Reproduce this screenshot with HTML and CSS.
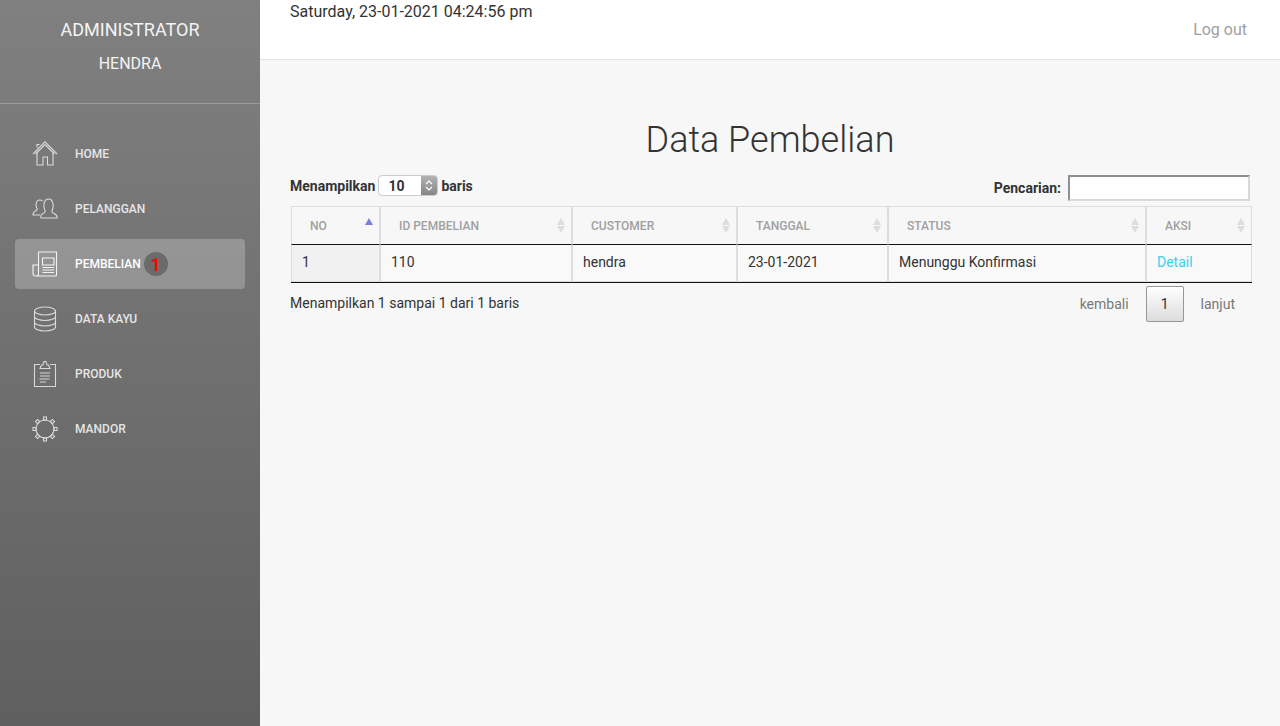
FILE: index.html
```html
<!DOCTYPE html>
<html lang="en">
<head>
  <meta charset="UTF-8">
  <meta name="viewport" content="width=device-width, initial-scale=1.0">
  <title>Data Pembelian</title>
  <link rel="stylesheet" href="styles.css">
</head>
<body>
  <div class="wrapper">
    <aside class="sidebar">
      <div class="logo">
        <div class="logo-role">ADMINISTRATOR</div>
        <div class="logo-name">HENDRA</div>
      </div>
      <ul class="nav">
        <li>
          <a href="#">
            <svg class="nav-icon" viewBox="0 0 26 26">
              <path d="M1 13 13 .8 25 13M3.500 13 13 3.500 22.500 13M5 6.500V3.500H7.500"/>
              <path d="M5 11.500V24h6v-8h4.500v8H21V11.500"/>
            </svg>
            <span>HOME</span>
          </a>
        </li>
        <li>
          <a href="#">
            <svg class="nav-icon" viewBox="0 0 26 26">
              <path d="M8 19H1c-.4-1.800.5-3 2.500-4 1.500-.7 2-1.300 1.500-2.500C4.200 11 3.800 9.500 4.200 7.500 4.700 5 6.300 4 7.800 4c1 0 2 .4 2.700 1.200"/>
              <path d="M9 22h16c.5-2-.5-3.300-3-4.500-2-.9-2.500-1.700-2-3 1-1.800 1.500-3.500 1-6.500C20.500 4.500 18.500 3 16.500 3S12.500 4.500 12 8c-.4 3 0 4.700 1 6.500.5 1.300 0 2.100-2 3-2.500 1.200-2.700 2.500-2 4.500z"/>
            </svg>
            <span>PELANGGAN</span>
          </a>
        </li>
        <li class="active">
          <a href="#">
            <svg class="nav-icon" viewBox="0 0 26 26">
              <path d="M6.500 1h18v23a1 1 0 0 1-1 1H3.500M6.500 1v21.500A2.500 2.500 0 0 1 4 25H3.500A2.500 2.500 0 0 1 1 22.500V14h5.500"/>
              <path d="M10.500 7h11.500v7H10.500zM10.500 16.500h11.500M10.500 19h11.500M10.500 21.500h11.500"/>
            </svg>
            <span>PEMBELIAN</span>
            <span class="badge">1</span>
          </a>
        </li>
        <li>
          <a href="#">
            <svg class="nav-icon" viewBox="0 0 26 26">
              <ellipse cx="13" cy="5" rx="10.500" ry="4"/>
              <path d="M2.500 5v16c0 2.200 4.700 4 10.500 4s10.500-1.800 10.500-4V5"/>
              <path d="M2.500 10.500c0 2.200 4.700 4 10.500 4s10.500-1.800 10.500-4M2.500 16c0 2.200 4.700 4 10.500 4s10.500-1.800 10.500-4"/>
            </svg>
            <span>DATA KAYU</span>
          </a>
        </li>
        <li>
          <a href="#">
            <svg class="nav-icon" viewBox="0 0 26 26">
              <path d="M8 3.500H2.500v22h21v-22H18M8 7.500 9.500 4H11l1-3.500h2L15 4h1.500L18 7.500z"/>
              <path d="M8 12h10M8 15h10M7.500 18h10M8 21h6"/>
            </svg>
            <span>PRODUK</span>
          </a>
        </li>
        <li>
          <a href="#">
            <svg class="nav-icon" viewBox="0 0 26 26">
              <circle cx="13" cy="13" r="9"/>
              <rect x="11.500" y="1" width="3" height="3"/>
              <rect x="11.500" y="1" width="3" height="3" transform="rotate(45 13 13)"/>
              <rect x="11.500" y="1" width="3" height="3" transform="rotate(90 13 13)"/>
              <rect x="11.500" y="1" width="3" height="3" transform="rotate(135 13 13)"/>
              <rect x="11.500" y="1" width="3" height="3" transform="rotate(180 13 13)"/>
              <rect x="11.500" y="1" width="3" height="3" transform="rotate(225 13 13)"/>
              <rect x="11.500" y="1" width="3" height="3" transform="rotate(270 13 13)"/>
              <rect x="11.500" y="1" width="3" height="3" transform="rotate(315 13 13)"/>
            </svg>
            <span>MANDOR</span>
          </a>
        </li>
      </ul>
    </aside>

    <div class="main">
      <header class="topbar">
        <div class="clock">Saturday, 23-01-2021 04:24:56 pm</div>
        <a class="logout" href="#">Log out</a>
      </header>

      <section class="content">
        <h2 class="title">Data Pembelian</h2>

        <div class="table-top">
          <label class="length">
            Menampilkan
            <span class="select">
              <span class="select-value">10</span>
              <span class="select-arrows">
                <svg viewBox="0 0 16 19"><path d="M5 8 8 5l3 3M5 11l3 3 3-3"/></svg>
              </span>
            </span>
            baris
          </label>
          <label class="search">
            Pencarian:
            <input type="text">
          </label>
        </div>

        <table class="data-table">
          <thead>
            <tr>
              <th class="col-no sorted">NO</th>
              <th class="col-id">ID PEMBELIAN</th>
              <th class="col-customer">CUSTOMER</th>
              <th class="col-date">TANGGAL</th>
              <th class="col-status">STATUS</th>
              <th class="col-action">AKSI</th>
            </tr>
          </thead>
          <tbody>
            <tr>
              <td class="cell-sorted">1</td>
              <td>110</td>
              <td>hendra</td>
              <td>23-01-2021</td>
              <td>Menunggu Konfirmasi</td>
              <td><a class="detail" href="#">Detail</a></td>
            </tr>
          </tbody>
        </table>

        <div class="table-bottom">
          <div class="info">Menampilkan 1 sampai 1 dari 1 baris</div>
          <div class="paging">
            <a href="#">kembali</a>
            <a class="current" href="#">1</a>
            <a href="#">lanjut</a>
          </div>
        </div>
      </section>
    </div>
  </div>
</body>
</html>
```

FILE: styles.css
```css
* {
  box-sizing: border-box;
}

html, body {
  height: 100%;
}

body {
  margin: 0;
  font-family: Roboto, Arial, sans-serif;
  font-size: 14px;
  color: #333;
  background-color: #f7f7f7;
  overflow: hidden;
}

a {
  text-decoration: none;
}

.wrapper {
  display: flex;
  height: 726px;
}

.sidebar {
  width: 260px;
  flex-shrink: 0;
  color: #fff;
  background: linear-gradient(to bottom, #808080, #5f5f5f);
}

.logo {
  height: 104px;
  padding-top: 19px;
  text-align: center;
  border-bottom: 1px solid rgba(255, 255, 255, 0.25);
}

.logo-role {
  font-size: 18px;
  line-height: 22px;
  font-weight: 400;
  color: #f4f4f4;
}

.logo-name {
  margin-top: 13px;
  font-size: 16px;
  line-height: 20px;
  font-weight: 400;
  color: #f4f4f4;
}

.nav {
  list-style: none;
  margin: 25px 0 0;
  padding: 0 15px;
  display: flex;
  flex-direction: column;
  gap: 5px;
}

.nav a {
  display: flex;
  align-items: center;
  height: 50px;
  padding-left: 17px;
  border-radius: 4px;
  font-size: 12px;
  font-weight: 500;
  color: #fff;
  opacity: 0.82;
}

.nav .active a {
  opacity: 1;
  background-color: rgba(255, 255, 255, 0.23);
}

.nav-icon {
  width: 26px;
  height: 26px;
  margin-right: 17px;
  fill: none;
  stroke: #fff;
  stroke-width: 1.1;
  opacity: 0.9;
}

.badge {
  width: 24px;
  height: 24px;
  margin-left: 3px;
  border-radius: 50%;
  background-color: #6b6b6b;
  color: #f00;
  font-size: 18px;
  font-weight: 700;
  line-height: 25px;
  text-align: center;
}

.main {
  flex: 1;
  min-width: 0;
}

.topbar {
  display: flex;
  justify-content: space-between;
  height: 60px;
  padding: 2px 33px 0 30px;
  background-color: #fff;
  border-bottom: 1px solid #e3e3e3;
}

.clock {
  font-size: 16px;
  line-height: 20px;
}

.logout {
  margin-top: 18px;
  font-size: 16px;
  line-height: 20px;
  font-weight: 400;
  color: #a0a0a0;
}

.content {
  padding: 56px 29px 0 30px;
}

.title {
  margin: 0 0 11px;
  font-size: 36px;
  line-height: 48px;
  font-weight: 300;
  text-align: center;
  padding-right: 1px;
}

.table-top {
  display: flex;
  justify-content: space-between;
  align-items: flex-start;
  height: 26px;
  margin-bottom: 5px;
  padding-right: 1px;
  font-weight: 700;
}

.length, .search {
  display: flex;
  align-items: center;
}

.select {
  display: flex;
  width: 60px;
  height: 21px;
  margin: 0 3px;
  border: 1px solid #ccc;
  border-radius: 4px;
  background-color: #fff;
  overflow: hidden;
}

.select-value {
  flex: 1;
  padding-left: 9px;
  line-height: 20px;
}

.select-arrows {
  display: flex;
  width: 16px;
  background: linear-gradient(to bottom, #b4b4b4, #858585);
}

.select-arrows svg {
  width: 16px;
  height: 19px;
  fill: none;
  stroke: #fff;
  stroke-width: 1.2;
}

.search input {
  width: 182px;
  height: 26px;
  margin-left: 7px;
  padding: 0;
  border: 2px solid #d8d8d8;
  border-top-color: #8f8f8f;
  border-left-color: #8f8f8f;
  background-color: #fff;
}

.data-table {
  width: 961px;
  margin-left: 1px;
  margin-right: -1px;
  border-collapse: separate;
  border-spacing: 0;
  table-layout: fixed;
  border-bottom: 1px solid #111;
}

.data-table th {
  position: relative;
  height: 39px;
  padding: 0 18px;
  border: 1px solid #ddd;
  border-bottom: 1px solid #111;
  font-size: 12px;
  font-weight: 500;
  text-align: left;
  color: #a0a0a0;
}

/* sort arrows */
.data-table th::before,
.data-table th::after {
  content: "";
  position: absolute;
  right: 6px;
  border-left: 4px solid transparent;
  border-right: 4px solid transparent;
}

.data-table th::before {
  top: 11px;
  border-bottom: 7px solid #ddd;
}

.data-table th::after {
  top: 19px;
  border-top: 7px solid #ddd;
}

.data-table th.sorted::before {
  border-bottom-color: #7b7fdc;
}

.data-table th.sorted::after {
  display: none;
}

.col-no {
  width: 89px;
}

.col-id {
  width: 192px;
}

.col-customer {
  width: 165px;
}

.col-date {
  width: 151px;
}

.col-status {
  width: 258px;
}

.data-table td {
  height: 37px;
  padding: 0 10px 2px;
  border: 1px solid #ddd;
  border-top: 0;
  background-color: #f9f9f9;
}

.data-table td.cell-sorted {
  background-color: #f1f1f1;
}

.detail {
  color: #3ad0f0;
}

.table-bottom {
  display: flex;
  justify-content: space-between;
  margin-top: 3px;
}

.info {
  padding-top: 7px;
  line-height: 20px;
}

.paging {
  display: flex;
  align-items: center;
  margin-right: -1px;
}

.paging a {
  padding: 0 17px;
  line-height: 34px;
  color: #777;
}

.paging .current {
  width: 38px;
  height: 36px;
  padding: 0;
  text-align: center;
  border: 1px solid #979797;
  border-radius: 2px;
  color: #333;
  background: linear-gradient(to bottom, #fff, #dcdcdc);
}
```
